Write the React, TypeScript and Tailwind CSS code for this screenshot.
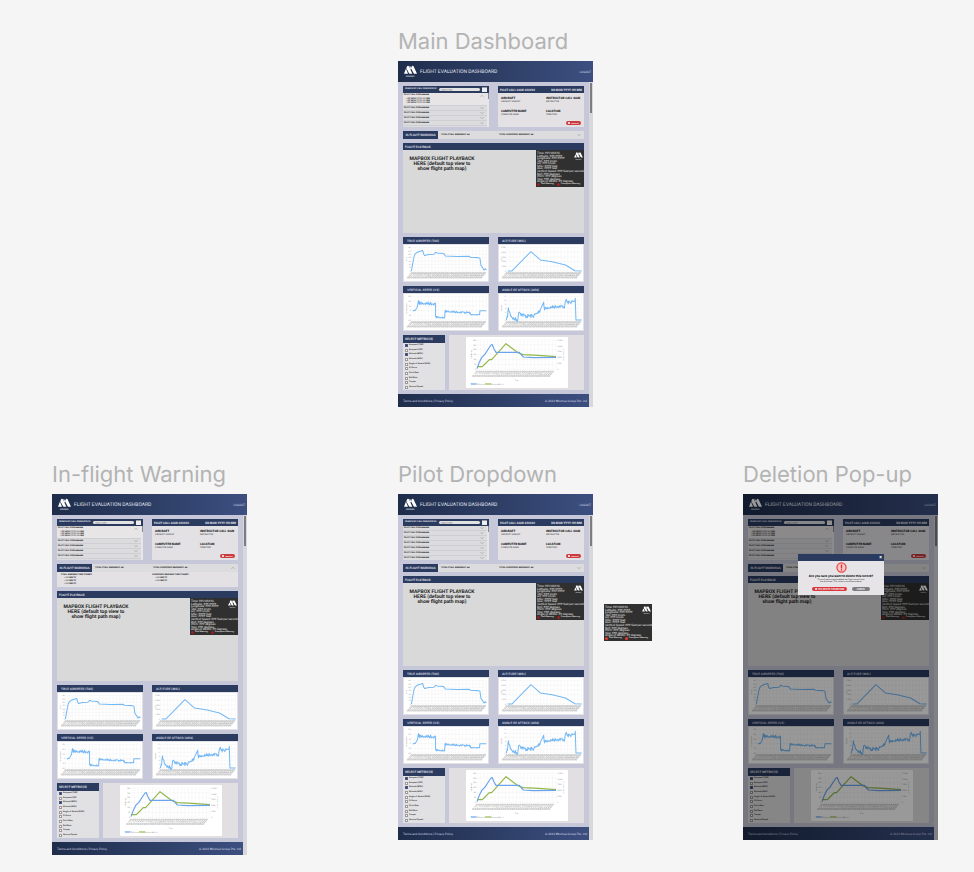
import type { ReactNode } from "react";

type Point = [number, number];

/* ---------- chart data ---------- */

function noisy(points: Point[], amplitude: number): Point[] {
  const out: Point[] = [];
  let seed = 7;
  for (let i = 0; i < points.length - 1; i++) {
    const [x0, y0] = points[i];
    const [x1, y1] = points[i + 1];
    const steps = Math.max(1, Math.round((x1 - x0) / 1.5));
    for (let s = 0; s < steps; s++) {
      seed = (seed * 16807) % 2147483647;
      const jitter = steps > 2 ? (seed / 2147483647 - 0.5) * 2 * amplitude : 0;
      out.push([x0 + ((x1 - x0) * s) / steps, y0 + ((y1 - y0) * s) / steps + jitter]);
    }
  }
  out.push(points[points.length - 1]);
  return out;
}

const TAS: Point[] = [
  [25, 80], [29, 58], [33, 36], [37, 28], [43, 24], [51, 21], [59, 19], [61, 28], [64, 34], [77, 31], [92, 30],
  [97, 24], [102, 26], [121, 28], [126, 35], [161, 37], [196, 36], [201, 39], [223, 40], [229, 42], [232, 63],
  [237, 70], [241, 77], [245, 73], [248, 77],
];
const ALTITUDE: Point[] = [
  [29, 80], [41, 80], [98, 22], [126, 47], [161, 52], [201, 62], [229, 79], [249, 80],
];
const VERTICAL: Point[] = [
  ...noisy([[30, 52], [37, 51], [43, 39], [46, 22], [48, 32]], 1),
  ...noisy([[49, 30], [97, 31]], 5),
  [97, 70],
  ...noisy([[98, 71], [124, 73]], 3),
  [125, 54],
  ...noisy([[126, 54], [200, 58]], 3),
  ...noisy([[201, 64], [228, 64]], 1),
  [229, 52], [248, 52],
];
const ATTACK: Point[] = [
  [25, 80],
  ...noisy([[27, 76], [31, 47], [38, 66], [46, 76], [59, 80], [62, 52], [68, 61], [80, 68], [104, 68], [116, 61], [126, 49]], 6),
  [136, 27],
  ...noisy([[137, 46], [151, 43], [176, 39], [198, 40], [203, 18], [206, 28], [229, 25]], 5),
  [230, 15], [232, 80], [249, 80],
];

const toPoints = (points: Point[]) => points.map(([x, y]) => `${x},${y}`).join(" ");
const range = (n: number) => Array.from({ length: n }, (_, i) => i);

function Grid({ x, y, w, h, cols, rows }: { x: number; y: number; w: number; h: number; cols: number; rows: number }) {
  return (
    <g stroke="#ececec" strokeWidth="1">
      {range(cols + 1).map((i) => (
        <line key={`c${i}`} x1={x + (w * i) / cols} x2={x + (w * i) / cols} y1={y} y2={y + h} />
      ))}
      {range(rows + 1).map((i) => (
        <line key={`r${i}`} x1={x} x2={x + w} y1={y + (h * i) / rows} y2={y + (h * i) / rows} />
      ))}
    </g>
  );
}

function TimeLabels({ x, y, w, count }: { x: number; y: number; w: number; count: number }) {
  return (
    <g fill="#7c7c7c" fontSize="6">
      {range(count).map((i) => {
        const px = x + (w * i) / (count - 1);
        return (
          <text key={i} textAnchor="end" transform={`translate(${px} ${y}) rotate(-50)`}>
            {`00:${String(10 + i)}:00`}
          </text>
        );
      })}
    </g>
  );
}

function LineChart({ data, unit, labels }: { data: Point[]; unit: string; labels: string[] }) {
  return (
    <svg viewBox="0 0 250 106" className="block h-full w-full" aria-hidden="true">
      <g transform="translate(-3 -3)">
        <Grid x={25} y={10} w={223} h={70} cols={22} rows={labels.length - 1} />
        <g fill="#8a8a8a" fontSize="5" textAnchor="end">
          {labels.map((label, i) => (
            <text key={label} x="23" y={12 + (70 * i) / (labels.length - 1)}>
              {label}
            </text>
          ))}
        </g>
        <text fill="#8a8a8a" fontSize="5" textAnchor="middle" transform="translate(12 45) rotate(-90)">
          {unit}
        </text>
        <TimeLabels x={29} y={85} w={219} count={40} />
        <polyline points={toPoints(data)} fill="none" stroke="#74b8f5" strokeWidth="3" strokeLinejoin="round" />
      </g>
    </svg>
  );
}

function CompareChart() {
  return (
    <svg viewBox="0 0 306 153" className="block h-full w-full" aria-hidden="true">
      <Grid x={33} y={9} w={237} h={88} cols={22} rows={6} />
      <g fill="#777777" fontSize="5">
        {["300", "250", "200", "150", "100", "50", "0"].map((label, i) => (
          <text key={label} x="30" y={11 + i * 14.6} textAnchor="end">
            {label}
          </text>
        ))}
        {["12,500", "10,000", "7,500", "5,000", "2,500", "0"].map((label, i) => (
          <text key={label} x="274" y={11 + i * 17.5}>
            {label}
          </text>
        ))}
        <text textAnchor="middle" transform="translate(18 53) rotate(-90)">TAS (knots)</text>
        <text textAnchor="middle" transform="translate(290 53) rotate(90)">Altitude (MSL) ft</text>
        <text x="152" y="133" textAnchor="middle">Time</text>
        <text x="32" y="143">TAS (knots)</text>
        <text x="76" y="143">Altitude (MSL) ft</text>
      </g>
      <TimeLabels x={36} y={103} w={228} count={36} />
      <g fill="none" strokeWidth="3.5" strokeLinejoin="round">
        <polyline
          stroke="#93b84a"
          points="33,89 49,89 57,81 70,68 77,68 120,20 157,48 172,53 217,55 270,59"
        />
        <polyline
          stroke="#6ba3ea"
          points="33,95 40,76 48,60 56,53 67,36 75,24 79,23 84,36 90,46 117,46 160,46 172,60 202,62 270,61"
        />
      </g>
      <rect x="15" y="139" width="16" height="4" fill="#a9cdf7" stroke="#6ba3ea" />
      <rect x="59" y="139" width="16" height="4" fill="#c3d99a" stroke="#93b84a" />
    </svg>
  );
}

/* ---------- shared pieces ---------- */

function Logo({ className }: { className: string }) {
  return (
    <svg viewBox="0 0 39 36" className={className} aria-hidden="true">
      <g fill="#ffffff">
        <path d="M0 25 L5 12 Q6 10 7 12 L12 25 Z" />
        <path d="M7 8 L9 3 Q10 1 12 1 Q14 1 15 3 L25 25 H19 Q16 25 15 23 Z" />
        <path d="M16 4 L17 2 Q18 1 19 3 L22 9 L20 13 Z" />
        <path d="M21 8 L23 3 Q24 1 26 1 Q28 1 29 3 L39 25 H33 Q30 25 29 23 Z" />
      </g>
      <text x="19" y="34" fill="#ffffff" fontSize="6" textAnchor="middle">
        MINIMAX
      </text>
    </svg>
  );
}

function Chevron({ up = false }: { up?: boolean }) {
  return (
    <svg viewBox="0 0 12 6" className="h-[2px] w-[4px] shrink-0" aria-hidden="true">
      <polyline points={up ? "1,5 6,1 11,5" : "1,1 6,5 11,1"} fill="none" stroke="#7c7c7c" strokeWidth="1.2" />
    </svg>
  );
}

function PanelTitle({ children }: { children: ReactNode }) {
  return (
    <h3 className="flex h-[7px] shrink-0 items-center bg-[#2b3b60] px-[4px] font-[Inter,sans-serif] text-[3px] leading-[4px] font-semibold whitespace-nowrap text-[#d3d7e2]">
      {children}
    </h3>
  );
}

const TELEMETRY = [
  "Time: HH:MM:SS",
  "Latitude: ###.####",
  "Longitude: ###.####",
  "TAS: ### knots",
  "GS: ### knots",
  "MSL: #### feet",
  "AGL: #### feet",
  "Vertical Speed: ### feet per second",
  "Roll: ### degrees",
  "Pitch: ### degrees",
  "Yaw: ### degrees",
  "Angle of Attack: ## degrees",
];

function Telemetry({ bright = false }: { bright?: boolean }) {
  const dot = bright ? "bg-[#e8392f]" : "bg-[#9d1f22]";
  return (
    <div className="relative flex h-[37px] w-[48px] flex-col justify-between overflow-hidden bg-[#303030] px-px pt-[2px] pb-px font-[Lato,sans-serif] text-[3px] leading-[2px] whitespace-nowrap text-[#ececec]">
      {TELEMETRY.map((line) => (
        <p key={line}>{line}</p>
      ))}
      <p className="flex items-center gap-px font-[Inter,sans-serif] text-[2px] font-semibold">
        <span className={`size-[3px] shrink-0 rounded-full ${dot}`} />
        <span>Stall Warning</span>
        <span className={`ml-[2px] size-[3px] shrink-0 rounded-full ${dot}`} />
        <span>Overspeed Warning</span>
      </p>
      <Logo className="absolute top-[2px] right-px h-[8px] w-[9px]" />
    </div>
  );
}

/* ---------- dashboard sections ---------- */

function PilotRow() {
  return (
    <div className="flex h-[5px] shrink-0 items-center justify-between border-b border-[#cfced2] pr-[3px] pl-px">
      <span>PILOT CALL SIGN ######</span>
      <Chevron />
    </div>
  );
}

function PilotList({ expanded }: { expanded: boolean }) {
  return (
    <section className="flex h-[41px] flex-col overflow-hidden bg-[#dcdbde] font-[Inter,sans-serif]">
      <div className="flex h-[7px] shrink-0 items-center gap-[2px] bg-[#2b3b60] px-[2px]">
        <label className="flex min-w-0 flex-1 items-center text-[2px] leading-[3px] font-bold whitespace-nowrap text-[#e8eaf0]">
          <span className="flex-1">SEARCH BY CALL SIGN/DATE/ID</span>
          <input
            type="text"
            placeholder="Search here"
            className="h-[3px] w-[41px] rounded-full bg-[#e2e2e2] px-[2px] text-[2px] leading-[2px] font-normal placeholder:text-[#888888]"
          />
        </label>
        <button type="button" aria-label="Pick a date" className="size-[5px] border-t border-[#9a9aa0] bg-[#eeeeee]" />
      </div>
      <div className="flex min-h-0 flex-1">
        <div className="flex min-w-0 flex-1 flex-col overflow-hidden text-[2px] leading-[3px] font-bold whitespace-nowrap text-[#111111]">
          {expanded && (
            <div className="shrink-0 border-b border-[#cfced2] bg-[#e8e5e6] pb-px">
              <div className="flex h-[5px] items-center justify-between pr-[3px] pl-px">
                <span>PILOT CALL SIGN ######</span>
                <Chevron up />
              </div>
              <ul className="flex flex-col pl-[3px] text-[2px] leading-[2px] font-semibold">
                {range(3).map((i) => (
                  <li key={i}>• DD MON YYYY HH:MM</li>
                ))}
              </ul>
            </div>
          )}
          {range(expanded ? 4 : 7).map((i) => (
            <PilotRow key={i} />
          ))}
        </div>
        <div className="w-[2px] bg-[#e6e5e8]">
          <div className="ml-px h-[6px] bg-[#8d8d90]" />
        </div>
      </div>
    </section>
  );
}

const DETAILS = [
  ["AIRCRAFT", "AIRCRAFT VARIANT"],
  ["INSTRUCTOR CALL SIGN", "INSTRUCTOR"],
  ["COMPUTER NAME", "COMPUTER NAME"],
  ["LOCATION", "TERRITORY"],
];

function PilotDetails() {
  return (
    <section className="relative flex h-[41px] flex-col bg-[#e3e1e4]">
      <header className="flex h-[7px] shrink-0 items-center justify-between bg-[#2b3b60] px-[2px] text-[3px] leading-[4px] font-bold whitespace-nowrap text-[#e8eaf0]">
        <h3>PILOT CALL SIGN ######</h3>
        <span>DD MON YYYY HH:MM</span>
      </header>
      <dl className="grid grid-cols-[45px_1fr] gap-y-[5px] px-[3px] pt-[3px]">
        {DETAILS.map(([term, value]) => (
          <div key={term}>
            <dt className="text-[3px] leading-[4px] font-extrabold whitespace-nowrap text-[#111111]">{term}</dt>
            <dd className="font-[Inter,sans-serif] text-[2px] leading-[4px] font-medium whitespace-nowrap text-[#333333]">{value}</dd>
          </div>
        ))}
      </dl>
      <button
        type="button"
        className="absolute right-[3px] bottom-[2px] flex h-[4px] w-[15px] items-center justify-center gap-px rounded-full bg-[#cb3a3e] text-[2px] leading-[2px] font-bold text-white"
      >
        <span className="size-[2px] rounded-full bg-white" />
        DELETE
      </button>
    </section>
  );
}

function Warnings({ open }: { open: boolean }) {
  return (
    <section className="bg-[#e3e1e4] font-[Inter,sans-serif] text-[2px] leading-[3px] font-bold whitespace-nowrap text-[#111111]">
      <div className="flex h-[8px] items-center bg-[#dcdbdd]">
        <h3 className="flex h-full w-[35px] items-center justify-center bg-[#2b3b60] font-[Roboto,sans-serif] text-[3px] font-medium text-[#e8eaf0]">
          IN-FLIGHT WARNINGS
        </h3>
        <span className="w-[61px] pl-[3px]">TOTAL STALL WARNINGS: ##</span>
        <span className="flex-1">TOTAL OVERSPEED WARNINGS: ##</span>
        <span className="pr-[3px]">
          <Chevron up={open} />
        </span>
      </div>
      {open && (
        <div className="grid h-[15px] grid-cols-[91px_1fr] pt-[2px] pl-[4px]">
          <div>
            <h4>STALL WARNING TIME STAMPS</h4>
            <ul className="pl-[3px] font-semibold">
              {range(3).map((i) => (
                <li key={i}>• HH:MM:SS</li>
              ))}
            </ul>
          </div>
          <div>
            <h4>OVERSPEED WARNING TIME STAMPS</h4>
            <ul className="pl-[3px] font-semibold">
              {range(2).map((i) => (
                <li key={i}>• HH:MM:SS</li>
              ))}
            </ul>
          </div>
        </div>
      )}
    </section>
  );
}

function Playback() {
  return (
    <section className="bg-[#d9d9d9]">
      <h3 className="flex h-[7px] items-center bg-[#2b3b60] px-[2px] text-[3px] leading-[4px] font-medium text-[#e8eaf0]">
        FLIGHT PLAYBACK
      </h3>
      <div className="flex h-[83px] items-start justify-between">
        <p className="w-[78px] pt-[7px] text-center text-[5px] leading-[5px] font-bold whitespace-nowrap text-[#1c1c1c]">
          MAPBOX FLIGHT PLAYBACK
          <br />
          HERE (default top view to
          <br />
          show flight path map)
        </p>
        <Telemetry />
      </div>
    </section>
  );
}

function ChartPanel({ title, data, unit, labels }: { title: string; data: Point[]; unit: string; labels: string[] }) {
  return (
    <section>
      <PanelTitle>{title}</PanelTitle>
      <div className="h-[38px] border border-[#e2e1e6] bg-white">
        <LineChart data={data} unit={unit} labels={labels} />
      </div>
    </section>
  );
}

const METRICS: [string, boolean][] = [
  ["Airspeed (TAS)", true],
  ["Airspeed (GS)", false],
  ["Altitude (MSL)", true],
  ["Altitude (AGL)", false],
  ["Angle of Attack (AOA)", false],
  ["G-Force", false],
  ["Pitch Rate", false],
  ["Roll Rate", false],
  ["Torque", false],
  ["Vertical Speed", false],
];

function Metrics() {
  return (
    <div className="flex gap-[4px]">
      <fieldset className="w-[42px] bg-[#e1e0e2]">
        <legend className="flex h-[8px] w-full items-center bg-[#2b3b60] px-[2px] font-[Inter,sans-serif] text-[3px] leading-[4px] font-semibold whitespace-nowrap text-[#e8eaf0]">
          SELECT METRIC(S)
        </legend>
        <div className="flex h-[47px] flex-col justify-around pl-[2px] font-[Inter,sans-serif]">
          {METRICS.map(([label, checked]) => (
            <label key={label} className="flex items-center gap-px text-[2px] leading-[3px] font-semibold whitespace-nowrap text-[#111111]">
              <input
                type="checkbox"
                defaultChecked={checked}
                className="size-[3px] appearance-none border border-[#9a9a9f] bg-white checked:border-[#4a5a85] checked:bg-[#2b3b60]"
              />
              {label}
            </label>
          ))}
        </div>
      </fieldset>
      <section className="flex flex-1 justify-center bg-[#e1dfe2] py-[2px]">
        <div className="w-[102px] rounded-[1px] bg-white">
          <CompareChart />
        </div>
      </section>
    </div>
  );
}

function Dashboard({ expanded = true, warningsOpen = false }: { expanded?: boolean; warningsOpen?: boolean }) {
  return (
    <div className="w-[195px] bg-[#d8d8da]">
      <header className="flex h-[21px] items-center gap-[3px] bg-linear-to-r from-[#1f2d4b] to-[#3c4f80] pr-[2px] pl-[6px] text-white">
        <Logo className="h-[13px] w-[13px]" />
        <h2 className="flex-1 text-[5px] leading-[6px] whitespace-nowrap text-[#e3e7f0]">FLIGHT EVALUATION DASHBOARD</h2>
        <a href="#logout" className="text-[3px] leading-[4px] text-[#d6dae6]">
          LOGOUT
        </a>
      </header>
      <div className="flex">
        <div className="min-w-0 flex-1">
          <main className="flex flex-col gap-[4px] bg-[#c6c7d8] px-[5px] py-[4px]">
            <div className="grid grid-cols-2 gap-x-[9px]">
              <PilotList expanded={expanded} />
              <PilotDetails />
            </div>
            <Warnings open={warningsOpen} />
            <Playback />
            <div className="grid grid-cols-2 gap-x-[9px] gap-y-[4px]">
              <ChartPanel title="TRUE AIRSPEED (TAS)" data={TAS} unit="Knots" labels={["140", "120", "100", "80", "60", "40", "20", "0"]} />
              <ChartPanel title="ALTITUDE (MSL)" data={ALTITUDE} unit="Feet" labels={["12,500", "10,000", "7,500", "5,000", "2,500", "0"]} />
              <ChartPanel title="VERTICAL SPEED (VS)" data={VERTICAL} unit="Feet per second" labels={["150", "100", "50", "0", "-50", "-100"]} />
              <ChartPanel title="ANGLE OF ATTACK (AOA)" data={ATTACK} unit="Degrees" labels={["12", "10", "8", "6", "4", "2", "0"]} />
            </div>
            <Metrics />
          </main>
          <footer className="flex h-[13px] items-center justify-between bg-linear-to-r from-[#1f2d4b] to-[#3c4f80] pr-[2px] pl-[5px] text-[3px] leading-[4px] whitespace-nowrap text-[#d6dae6]">
            <p>
              <a href="#terms">Terms and Conditions</a> | <a href="#privacy">Privacy Policy</a>
            </p>
            <p>© 2023 Minimax Group Pte. Ltd</p>
          </footer>
        </div>
        <div className="w-[4px] px-px pt-px">
          <div className="h-[30px] bg-[#7d7d80]" />
        </div>
      </div>
    </div>
  );
}

function DeleteDialog() {
  return (
    <div role="dialog" aria-label="Delete record" className="flex h-[41px] w-[86px] flex-col items-center bg-[#e6e4e7] text-black">
      <div className="flex h-[7px] w-full items-center justify-end bg-[#2b3b60] pr-[2px]">
        <button type="button" aria-label="Close" className="flex size-[3px] items-center justify-center text-[5px] leading-[3px] font-bold text-white">
          ×
        </button>
      </div>
      <svg viewBox="0 0 34 34" className="mt-px size-[11px]" aria-hidden="true">
        <circle cx="17" cy="17" r="14" fill="#f6c9c9" stroke="#ee4444" strokeWidth="4" />
        <rect x="15" y="8" width="4" height="12" fill="#e22b2b" />
        <rect x="15" y="22" width="4" height="4" fill="#e22b2b" />
      </svg>
      <h3 className="pt-px font-[Inter,sans-serif] text-[3px] leading-[4px] font-bold whitespace-nowrap">Are you sure you want to delete this record?</h3>
      <p className="pt-px text-center font-[Inter,sans-serif] text-[2px] leading-[2px] whitespace-nowrap">
        This will permanently delete the flight record from
        <br />
        the database. This action cannot be undone.
      </p>
      <div className="flex gap-[5px] pt-[4px] font-[Inter,sans-serif]">
        <button type="button" className="flex h-[4px] w-[35px] items-center justify-center gap-px rounded-full bg-[#d9363b] text-[2px] leading-[2px] font-bold text-white">
          <span className="size-[2px] rounded-full bg-white" />
          YES, DELETE THIS RECORD
        </button>
        <button type="button" className="flex h-[4px] w-[18px] items-center justify-center rounded-full bg-[#7c7c80] text-[2px] leading-[2px] font-bold text-white">
          CANCEL
        </button>
      </div>
    </div>
  );
}

/* ---------- canvas ---------- */

function Frame({ title, place, children }: { title: string; place: string; children?: ReactNode }) {
  return (
    <div className={`absolute ${place}`}>
      <h1 className="mb-[5px] font-[Inter,sans-serif] text-[22px] leading-[28px] whitespace-nowrap text-[#b3b3b3]">{title}</h1>
      <div className="relative">{children}</div>
    </div>
  );
}

export default function App() {
  return (
    <div className="relative h-screen w-full overflow-hidden bg-[#f5f5f5] font-[Roboto,'Liberation_Sans',sans-serif] [text-rendering:geometricPrecision]">
      <Frame title="Main Dashboard" place="left-[398px] top-[28px]">
        <Dashboard />
      </Frame>
      <Frame title="In-flight Warning" place="left-[52px] top-[461px]">
        <Dashboard warningsOpen />
      </Frame>
      <Frame title="Pilot Dropdown" place="left-[398px] top-[461px]">
        <Dashboard expanded={false} />
      </Frame>
      <div className="absolute top-[604px] left-[604px]">
        <Telemetry bright />
      </div>
      <Frame title="Deletion Pop-up" place="left-[743px] top-[461px]">
        <Dashboard />
        <div className="absolute inset-0 bg-black/40" />
        <div className="absolute top-[60px] left-[55px]">
          <DeleteDialog />
        </div>
      </Frame>
      <Frame title="Search by Date" place="left-[420px] top-[868px]" />
    </div>
  );
}
